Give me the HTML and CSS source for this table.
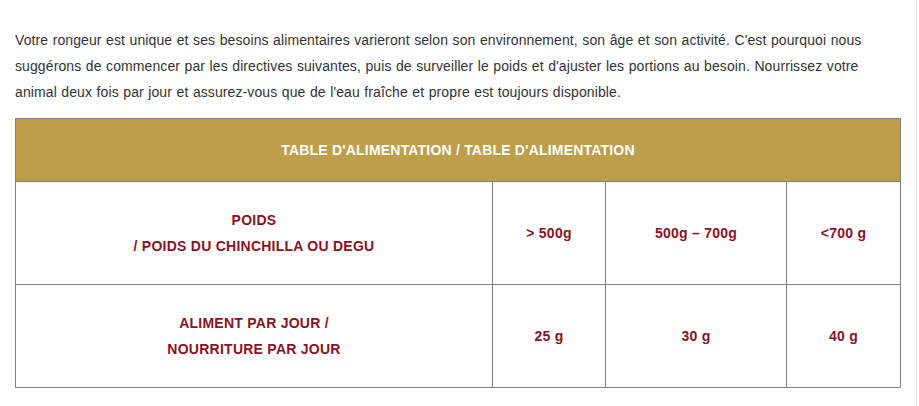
FILE: index.html
```html
<!DOCTYPE html>
<html lang="fr">
<head>
<meta charset="utf-8">
<link rel="stylesheet" href="styles.css">
</head>
<body>
<div class="page">
  <p class="intro">Votre rongeur est unique et ses besoins alimentaires varieront selon son environnement, son âge et son activité. C'est pourquoi nous suggérons de commencer par les directives suivantes, puis de surveiller le poids et d'ajuster les portions au besoin. Nourrissez votre animal deux fois par jour et assurez-vous que de l'eau fraîche et propre est toujours disponible.</p>
  <table class="feed">
    <colgroup>
      <col class="c1"><col class="c2"><col class="c3"><col class="c4">
    </colgroup>
    <thead>
      <tr><th colspan="4">TABLE D'ALIMENTATION / TABLE D'ALIMENTATION</th></tr>
    </thead>
    <tbody>
      <tr>
        <td>POIDS<br>/ POIDS DU CHINCHILLA OU DEGU</td>
        <td>&gt; 500g</td>
        <td>500g – 700g</td>
        <td>&lt;700 g</td>
      </tr>
      <tr>
        <td>ALIMENT PAR JOUR /<br>NOURRITURE PAR JOUR</td>
        <td>25 g</td>
        <td>30 g</td>
        <td>40 g</td>
      </tr>
    </tbody>
  </table>
</div>
</body>
</html>
```
FILE: styles.css
```css
html, body {
  margin: 0;
  padding: 0;
  background: #fff;
}
.page {
  width: 917px;
  height: 406px;
  box-sizing: border-box;
  border-right: 1px solid #e2e2e2;
  padding: 27px 0 0 15px;
  font-family: "Liberation Sans", Arial, sans-serif;
}
.intro {
  margin: 0 0 13px 0;
  width: 866px;
  font-size: 14px;
  line-height: 26px;
  letter-spacing: 0.1px;
  word-spacing: 0.5px;
  color: #333;
}
.feed {
  width: 885px;
  border-collapse: collapse;
  table-layout: fixed;
}
.feed th {
  background: #bd9e4b;
  color: #fff;
  font-size: 14px;
  letter-spacing: 0.2px;
  font-weight: bold;
  height: 62px;
  padding: 0;
  border: 1px solid #808080;
  text-align: center;
  vertical-align: middle;
}
.feed td {
  border: 1px solid #808080;
  height: 102px;
  padding: 0;
  text-align: center;
  vertical-align: middle;
  color: #8b1222;
  font-size: 14px;
  letter-spacing: 0.25px;
  font-weight: bold;
  line-height: 26px;
}
.c1 { width: 477px; }
.c2 { width: 113px; }
.c3 { width: 181px; }
.c4 { width: 114px; }
```
